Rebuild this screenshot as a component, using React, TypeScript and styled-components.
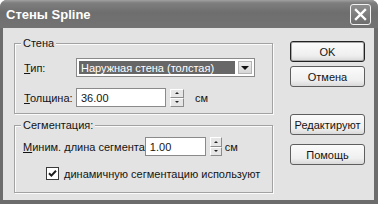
import styled, { createGlobalStyle } from 'styled-components';

const GlobalStyle = createGlobalStyle`
  html, body {
    margin: 0;
    padding: 0;
    background: #ffffff;
  }
  body {
    font-family: "Liberation Sans", Arial, sans-serif;
    font-size: 11px;
    color: #141414;
  }
`;

const Window = styled.div`
  width: 378px;
  height: 204px;
  display: flex;
  flex-direction: column;
  background: #6c6c6c;
  border-radius: 7px 7px 0 0;
  overflow: hidden;
`;

const TitleBar = styled.div`
  height: 28px;
  flex: none;
  display: flex;
  align-items: center;
  justify-content: space-between;
  padding: 1px 7px 0 6px;
  box-sizing: border-box;
  background: linear-gradient(#a0a0a0 0, #7e7e7e 3px, #6e6e6e 45%, #737373 100%);
`;

const Title = styled.div`
  font-size: 13px;
  font-weight: bold;
  color: #ffffff;
`;

const CloseButton = styled.div`
  width: 21px;
  height: 21px;
  box-sizing: border-box;
  border: 1px solid #f2f2f2;
  border-radius: 3px;
  background: linear-gradient(#8e8e8e, #6e6e6e);
  display: flex;
  align-items: center;
  justify-content: center;
`;

const Body = styled.div`
  flex: 1;
  display: flex;
  margin: 0 4px 4px 3px;
  background: #e3e3e3;
`;

const LeftCol = styled.div`
  width: 259px;
  margin-left: 11px;
  padding-top: 15px;
  display: flex;
  flex-direction: column;
  gap: 11px;
`;

const RightCol = styled.div`
  margin-left: 17px;
  padding-top: 13px;
  display: flex;
  flex-direction: column;
`;

const Group = styled.div<{ $h: number; $pt: number; $pl: number }>`
  position: relative;
  height: ${(p) => p.$h}px;
  box-sizing: border-box;
  border: 1px solid #a2a2a2;
  box-shadow: inset 1px 1px 0 #fbfbfb, 1px 1px 0 #fbfbfb;
  padding: ${(p) => p.$pt}px 0 0 ${(p) => p.$pl}px;
`;

const Legend = styled.span`
  position: absolute;
  top: -8px;
  left: 6px;
  padding: 0 2px;
  line-height: 14px;
  background: #e3e3e3;
`;

const FormGrid = styled.div`
  display: grid;
  grid-template-columns: 52px auto;
  row-gap: 11px;
  align-items: center;
`;

const Row = styled.div`
  display: flex;
  align-items: center;
`;

const Label = styled.span`
  white-space: nowrap;
`;

const Combo = styled.div`
  width: 179px;
  height: 19px;
  box-sizing: border-box;
  border: 1px solid #8a8a8a;
  background: #ffffff;
  padding: 1px;
  display: flex;
  gap: 2px;
`;

const ComboValue = styled.div`
  flex: 1;
  margin: 1px 0 1px 1px;
  background: #676767;
  color: #ffffff;
  padding-left: 2px;
  display: flex;
  align-items: center;
  white-space: nowrap;
`;

const ComboButton = styled.div`
  width: 16px;
  box-sizing: border-box;
  border: 1px solid #ffffff;
  outline: 1px solid #b4b4b4;
  outline-offset: -2px;
  background: linear-gradient(#f0f0f0, #d4d4d4);
  display: flex;
  align-items: center;
  justify-content: center;
`;

const DownArrow = styled.span`
  width: 0;
  height: 0;
  border-left: 4px solid transparent;
  border-right: 4px solid transparent;
  border-top: 4px solid #111111;
`;

const TextInput = styled.div<{ $w: number }>`
  width: ${(p) => p.$w}px;
  height: 19px;
  box-sizing: border-box;
  border: 1px solid #8a8a8a;
  background: #ffffff;
  padding-left: 4px;
  display: flex;
  align-items: center;
`;

const Spinner = styled.div<{ $w: number; $h: number }>`
  width: ${(p) => p.$w}px;
  height: ${(p) => p.$h}px;
  margin-left: 4px;
  display: flex;
  flex-direction: column;
`;

const SpinButton = styled.div`
  flex: 1;
  box-sizing: border-box;
  border: 1px solid;
  border-color: #ffffff #8c8c8c #8c8c8c #ffffff;
  background: #e6e6e6;
  display: flex;
  align-items: center;
  justify-content: center;
`;

const TinyArrow = styled.span<{ $up?: boolean }>`
  width: 0;
  height: 0;
  border-left: 2px solid transparent;
  border-right: 2px solid transparent;
  ${(p) => (p.$up ? 'border-bottom: 2px solid #222;' : 'border-top: 2px solid #222;')}
`;

const Unit = styled.span<{ $ml: number }>`
  margin-left: ${(p) => p.$ml}px;
`;

const CheckRow = styled.div`
  margin-top: 11px;
  padding-left: 23px;
  display: flex;
  align-items: center;
  gap: 5px;
`;

const CheckBox = styled.span`
  width: 13px;
  height: 13px;
  box-sizing: border-box;
  border: 1px solid #3a3a3a;
  background: #ffffff;
  display: flex;
  align-items: center;
  justify-content: center;
`;

const Button = styled.button<{ $mt: number; $default?: boolean }>`
  width: 75px;
  height: 21px;
  margin-top: ${(p) => p.$mt}px;
  padding: 0;
  box-sizing: border-box;
  border: 1px solid ${(p) => (p.$default ? '#222222' : '#5e5e5e')};
  border-radius: 3px;
  background: linear-gradient(#fbfbfb, #efefef 70%, #d9d9d9);
  box-shadow: ${(p) => (p.$default ? 'inset 0 0 0 1px #a8a8a8' : 'none')};
  font-family: "Liberation Sans", Arial, sans-serif;
  font-size: 11px;
  color: #141414;
`;

export default function App() {
  return (
    <>
      <GlobalStyle />
      <Window>
        <TitleBar>
          <Title>Стены Spline</Title>
          <CloseButton>
            <svg width="13" height="13" viewBox="0 0 13 13">
              <path d="M2 2 L11 11 M11 2 L2 11" stroke="#ffffff" strokeWidth="2.4" strokeLinecap="square" />
            </svg>
          </CloseButton>
        </TitleBar>
        <Body>
          <LeftCol>
            <Group $h={71} $pt={14} $pl={9}>
              <Legend>Стена</Legend>
              <FormGrid>
                <Label>
                  <u>Т</u>ип:
                </Label>
                <Combo>
                  <ComboValue>Наружная стена (толстая)</ComboValue>
                  <ComboButton>
                    <DownArrow />
                  </ComboButton>
                </Combo>
                <Label>
                  <u>Т</u>олщина:
                </Label>
                <Row>
                  <TextInput $w={90}>36.00</TextInput>
                  <Spinner $w={14} $h={18}>
                    <SpinButton>
                      <TinyArrow $up />
                    </SpinButton>
                    <SpinButton>
                      <TinyArrow />
                    </SpinButton>
                  </Spinner>
                  <Unit $ml={11}>см</Unit>
                </Row>
              </FormGrid>
            </Group>
            <Group $h={68} $pt={11} $pl={8}>
              <Legend>Сегментация:</Legend>
              <Row>
                <Label>
                  <u>М</u>иним. длина сегмента
                </Label>
                <TextInput $w={61}>1.00</TextInput>
                <Spinner $w={12} $h={19}>
                  <SpinButton>
                    <TinyArrow $up />
                  </SpinButton>
                  <SpinButton>
                    <TinyArrow />
                  </SpinButton>
                </Spinner>
                <Unit $ml={3}>см</Unit>
              </Row>
              <CheckRow>
                <CheckBox>
                  <svg width="9" height="9" viewBox="0 0 9 9">
                    <path d="M1 4.2 L3.4 6.6 L8 1.8" fill="none" stroke="#1c1c1c" strokeWidth="2" />
                  </svg>
                </CheckBox>
                <Label>динамичную сегментацию используют</Label>
              </CheckRow>
            </Group>
          </LeftCol>
          <RightCol>
            <Button $mt={0} $default>
              OK
            </Button>
            <Button $mt={4}>Отмена</Button>
            <Button $mt={27}>Редактируют</Button>
            <Button $mt={9}>Помощь</Button>
          </RightCol>
        </Body>
      </Window>
    </>
  );
}
